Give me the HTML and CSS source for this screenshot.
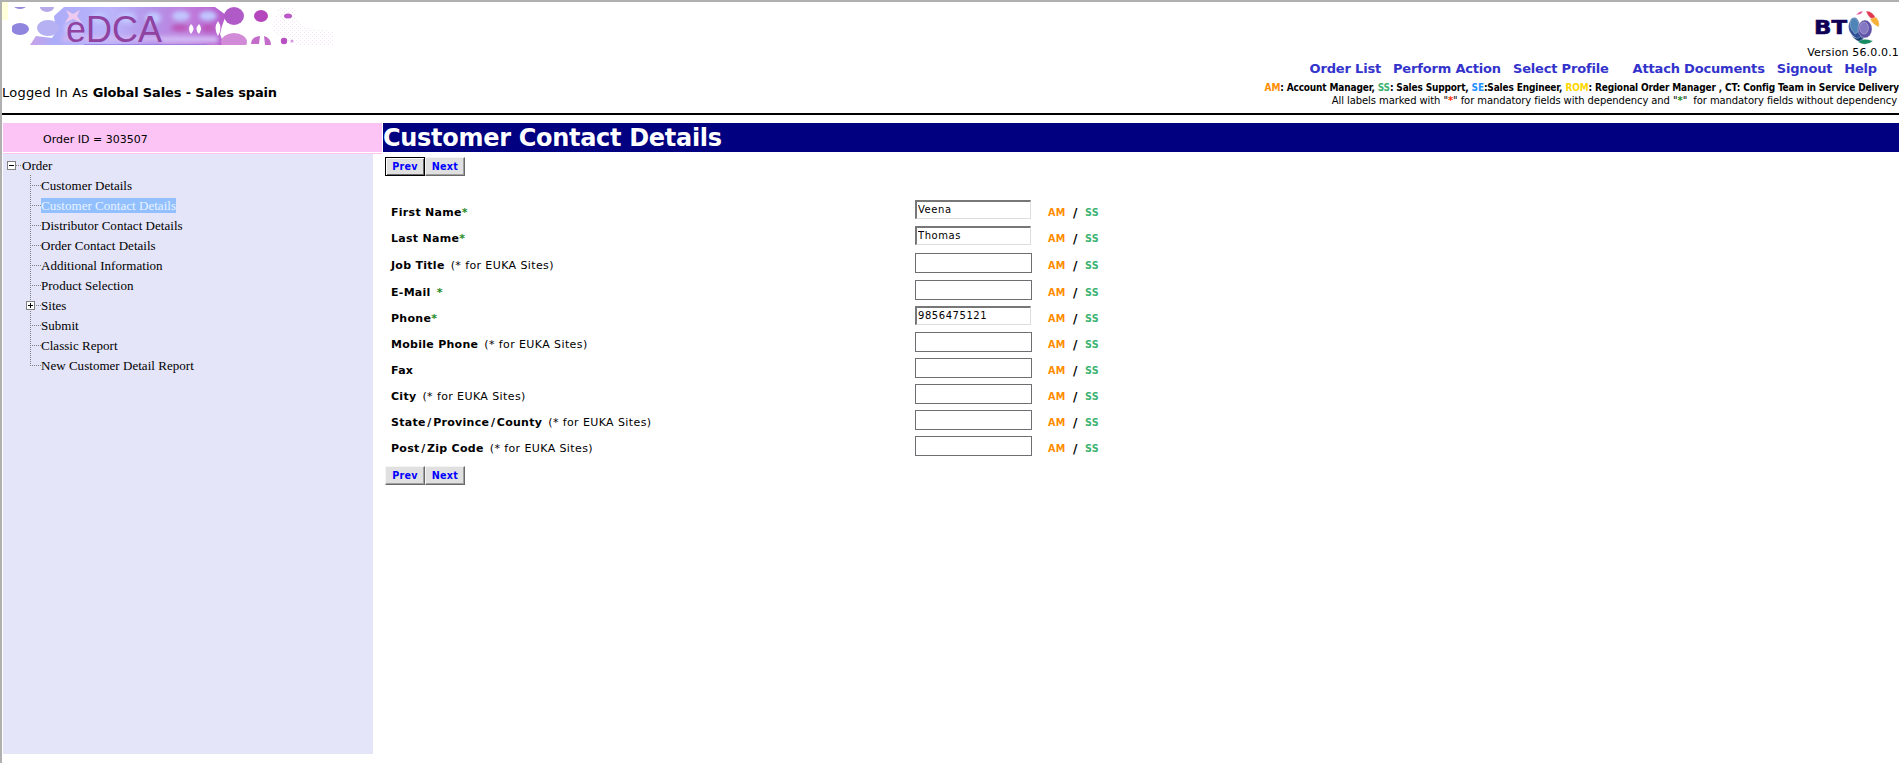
FILE: index.html
```html
<!DOCTYPE html>
<html lang="en">
<head>
<meta charset="utf-8">
<title>eDCA - Customer Contact Details</title>
<link rel="stylesheet" href="styles.css">
</head>
<body>
<div class="frame">
<header class="header">
  <div class="brand-side">
    <svg class="banner" width="338" height="43" viewBox="0 0 338 43">
      <defs>
        <linearGradient id="wash" x1="0" x2="1"><stop offset="0" stop-color="#c9a2e8"/><stop offset=".12" stop-color="#acacf8"/><stop offset=".42" stop-color="#bbb4fa"/><stop offset=".62" stop-color="#b493e8"/><stop offset=".8" stop-color="#c07fdc"/><stop offset="1" stop-color="#b55bcc"/></linearGradient>
        <filter id="soft"><feGaussianBlur stdDeviation="2"/></filter>
        <filter id="edge"><feGaussianBlur stdDeviation=".6"/></filter>
        <pattern id="dots" width="4" height="4" patternUnits="userSpaceOnUse"><path d="M0 0h1v1h-1zM2 2h1v1h-1z" fill="#f4e2f7"/></pattern>
        <clipPath id="strip"><rect x="10" y="5" width="328" height="38"/></clipPath>
      </defs>
      <rect width="6" height="18" fill="#ffffdc"/>
      <g clip-path="url(#strip)">
        <path d="M276 6h18v10l12 10 26 3v14h-40l-22-14z" fill="url(#dots)"/>
        <g filter="url(#edge)">
          <path d="M28 43L34 34L50 36L54 30L52 14L62 5H213L224 13L220 24L218 32L222 43Z" fill="url(#wash)"/>
          <ellipse cx="18" cy="4" rx="6" ry="3" fill="#9987d8"/><ellipse cx="45" cy="5" rx="7" ry="5" fill="#b6aae8"/>
          <ellipse cx="18" cy="27" rx="9" ry="6" fill="#8f85df"/><ellipse cx="46" cy="26" rx="11" ry="8" fill="#b5b1f3"/>
          <ellipse cx="232" cy="14" rx="10" ry="9" fill="#b05ac8"/><ellipse cx="259" cy="14" rx="7" ry="6" fill="#b547bd"/>
          <ellipse cx="286" cy="14" rx="4" ry="2.5" fill="#b958c6"/>
          <ellipse cx="232" cy="40" rx="13" ry="9" fill="#d28bd7"/>
          <path d="M249 42q0-7 9-8l-1 8zM262 34q7 2 7 9h-6z" fill="#c36cca"/>
          <circle cx="282" cy="39" r="3.2" fill="#b84fc1"/><circle cx="290" cy="39" r="1.5" fill="#d496dc"/>
          <path d="M64 8l7 4 7-4-3 6 5 7-9-4-8 4 4-7z" fill="#edc9ef"/>
        </g>
        <g filter="url(#soft)">
          <g fill="#c1c6ff"><ellipse cx="97" cy="16" rx="8" ry="6"/><ellipse cx="125" cy="16" rx="9" ry="6"/><ellipse cx="151" cy="16" rx="8" ry="6"/><ellipse cx="179" cy="14" rx="9" ry="5"/><ellipse cx="206" cy="14" rx="9" ry="5"/></g>
          <path d="M168 26q10-8 20 0q-10 7-20 0zM199 26q8-8 14 0q-7 8-14 0z" fill="#bb55b8"/>
          <path d="M60 34H160V39H60zM160 34h56v7h-56z" fill="#d2b8f4"/>
          <path d="M63 22h18v10H63z" fill="#d3c6ff"/>
        </g>
        <g filter="url(#edge)" fill="#fff"><path d="M216 19q-5 7 0 15q5-8 0-15zM197 22q4 4 0 10q-5-5 0-10zM189 22q5 4 0 10q-4-5 0-10z"/></g>
        <path d="M82 42.5H205" stroke="#9574e5" opacity=".7"/>
      </g>
      <text x="64" y="40" class="banner-name">eDCA</text>
    </svg>
    <div class="login"><span class="login-as">Logged In As </span><b>Global Sales - Sales spain</b></div>
  </div>
  <div class="tools">
    <svg class="bt" width="66" height="34" viewBox="0 0 66 34">
      <text x="0" y="24" class="bt-name" textLength="33" lengthAdjust="spacingAndGlyphs">BT</text>
      <g stroke="#fff" stroke-width=".3">
      <path d="M37 9Q42 5 45 12L50 27Q49 33 43 29Q30 21 37 9Z" fill="#2f4f98"/>
      <path d="M38 8Q44 7 45 16Q46 22 41 24Q33 16 38 8Z" fill="#4f85b6"/>
      <ellipse cx="51" cy="19" rx="7" ry="9" fill="#6053a8"/><ellipse cx="50" cy="18" rx="4.5" ry="6" fill="#8478c2"/>
      <path d="M37 25q6 6 10 1l3 6q-7 1-13-7z" fill="#153e72"/>
      <path d="M44 32q5-5 15-1q-7 6-15 1z" fill="#178b62"/>
      <path d="M52 1q7 0 10 8l-4 0q-4-2-6-8z" fill="#e23650"/>
      <path d="M56 9l6-2q4 4 3 10-6-2-9-8z" fill="#f6b038"/>
      <path d="M42 5q3-4 7-4l-2 3z" fill="#e2559a"/></g>
    </svg>
    <div class="version">Version 56.0.0.1</div>
    <nav class="nav"><a>Order List</a><a>Perform Action</a><a>Select Profile</a><a class="gap">Attach Documents</a><a>Signout</a><a>Help</a></nav>
    <div class="legend"><span class="am">AM</span>: Account Manager, <span class="ss">SS</span>: Sales Support, <span class="se">SE</span>:Sales Engineer, <span class="rom">ROM</span>: Regional Order Manager , CT: Config Team in Service Delivery</div>
    <div class="note">All labels marked with "<span class="red">*</span>" for mandatory fields with dependency and "<span class="green">*</span>"&nbsp; for mandatory fields without dependency</div>
  </div>
</header>
<div class="columns">
  <aside class="side">
    <div class="order-id">Order ID = 303507</div>
    <div class="tree">
      <div class="root"><i class="box"></i><i class="link"></i><span>Order</span></div>
      <ul class="nodes">
        <li><span>Customer Details</span></li>
        <li><span class="selected">Customer Contact Details</span></li>
        <li><span>Distributor Contact Details</span></li>
        <li><span>Order Contact Details</span></li>
        <li><span>Additional Information</span></li>
        <li><span>Product Selection</span></li>
        <li class="branch"><i class="box plus"></i><span>Sites</span></li>
        <li><span>Submit</span></li>
        <li><span>Classic Report</span></li>
        <li class="last"><span>New Customer Detail Report</span></li>
      </ul>
    </div>
  </aside>
  <main class="main">
    <h1 class="title">Customer Contact Details</h1>
    <div class="buttons"><button class="btn focus">Prev</button><button class="btn">Next</button></div>
    <div class="form">
      <div class="row"><label><b>First Name</b><span class="green">*</span></label><input class="filled" value="Veena"><div class="roles"><span class="am">AM</span><b>/</b><span class="ss">SS</span></div></div>
      <div class="row"><label><b>Last Name</b><span class="green">*</span></label><input class="filled" value="Thomas"><div class="roles"><span class="am">AM</span><b>/</b><span class="ss">SS</span></div></div>
      <div class="row"><label><b>Job Title</b><span class="hint">(* for EUKA Sites)</span></label><input><div class="roles"><span class="am">AM</span><b>/</b><span class="ss">SS</span></div></div>
      <div class="row"><label><b>E-Mail</b><span class="green hint">*</span></label><input><div class="roles"><span class="am">AM</span><b>/</b><span class="ss">SS</span></div></div>
      <div class="row"><label><b>Phone</b><span class="green">*</span></label><input class="filled" value="9856475121"><div class="roles"><span class="am">AM</span><b>/</b><span class="ss">SS</span></div></div>
      <div class="row"><label><b>Mobile Phone</b><span class="hint">(* for EUKA Sites)</span></label><input><div class="roles"><span class="am">AM</span><b>/</b><span class="ss">SS</span></div></div>
      <div class="row"><label><b>Fax</b></label><input><div class="roles"><span class="am">AM</span><b>/</b><span class="ss">SS</span></div></div>
      <div class="row"><label><b>City</b><span class="hint">(* for EUKA Sites)</span></label><input><div class="roles"><span class="am">AM</span><b>/</b><span class="ss">SS</span></div></div>
      <div class="row"><label><b>State<span class="slash">/</span>Province<span class="slash">/</span>County</b><span class="hint">(* for EUKA Sites)</span></label><input><div class="roles"><span class="am">AM</span><b>/</b><span class="ss">SS</span></div></div>
      <div class="row"><label><b>Post<span class="slash">/</span>Zip Code</b><span class="hint">(* for EUKA Sites)</span></label><input><div class="roles"><span class="am">AM</span><b>/</b><span class="ss">SS</span></div></div>
    </div>
    <div class="buttons"><button class="btn">Prev</button><button class="btn">Next</button></div>
  </main>
</div>
</div>
</body>
</html>
```
FILE: styles.css
```css
* { box-sizing: border-box; }
body { margin: 0; overflow: hidden; background: #fff; color: #000; font-family: Verdana, "DejaVu Sans", sans-serif; }
.frame { height: 763px; border-left: 2px solid #b0b0b0; border-top: 2px solid #b0b0b0; }
.header { height: 113px; border-bottom: 2px solid #000; display: flex; justify-content: space-between; white-space: nowrap; }
.banner { display: block; overflow: visible; }
.banner-name { font: 36px "Liberation Sans", Arial, sans-serif; fill: #8f429f; }
.login { margin-top: 39px; font-size: 13px; line-height: 18px; letter-spacing: -.14px; }
.login-as { letter-spacing: .22px; }
.tools { display: flex; flex-direction: column; align-items: flex-end; }
.bt { margin: 8px 19px 0 0; overflow: visible; }
.bt-name { font: bold 19px "DejaVu Sans", sans-serif; fill: #100055; stroke: #100055; stroke-width: .6; }
.version { font-size: 11px; line-height: 14px; letter-spacing: .15px; margin-top: 2px; }
.nav { display: flex; gap: 12px; padding-right: 22px; line-height: 20px; margin-top: -1px; font-size: 13px; font-weight: bold; color: #3333cc; letter-spacing: -.18px; }
.nav .gap { margin-left: 12px; }
.legend { font: bold 10px/14px "DejaVu Sans Condensed", "DejaVu Sans", sans-serif; letter-spacing: -.15px; margin-top: 2px; }
.note { font-size: 10px; line-height: 14px; padding-right: 2px; letter-spacing: -.09px; margin-top: -1px; }
.am { color: #ff8c00; }
.ss { color: #3cb371; }
.se { color: #1e90ff; }
.rom { color: #ffd700; }
.red { color: #ff3300; }
.green { color: #228b22; }
.note .red, .note .green { font-weight: bold; }
.columns { display: flex; padding: 8px 0 0 1px; }
.side { width: 380px; }
.order-id { width: 379px; height: 29px; background: #fcc4f4; font-size: 11px; line-height: 34px; padding-left: 40px; margin-bottom: 1px; box-shadow: 0 1px #fff, 0 2px #fcc4f4; }
.tree { margin-top: 2px; width: 370px; height: 600px; background: #e4e5f9; font: 13px/20px "Liberation Serif", "Times New Roman", serif; letter-spacing: .03px; padding: 1px 0 0 4px; }
.root { display: flex; align-items: center; height: 20px; }
.root span { padding-top: 1px; }
.box { width: 9px; height: 9px; flex: none; border: 1px solid #808080; background: linear-gradient(#000, #000) center / 5px 1px no-repeat, #fff; }
.plus { background: linear-gradient(#000, #000) center / 5px 1px no-repeat, linear-gradient(#000, #000) center / 1px 5px no-repeat, #fff; }
.link { width: 5px; border-top: 1px dotted #808080; margin-right: 1px; }
.nodes { list-style: none; margin: 0 0 0 23px; padding: 0; }
.nodes li { height: 20px; display: flex; align-items: center; background: repeating-linear-gradient(#808080 0 1px, transparent 1px 2px) 0 0 / 1px 100% no-repeat, repeating-linear-gradient(90deg, #808080 0 1px, transparent 1px 2px) 0 10px / 11px 1px no-repeat; padding-left: 11px; }
.nodes .last { background-size: 1px 11px, 11px 1px; }
.nodes .branch { margin-left: -4px; padding-left: 0; background-position: 4px 0, 4px 10px; }
.branch .plus { margin-right: 6px; }
.nodes span { line-height: 15px; }
.nodes .selected { background: #92c0ff; color: #e8f3ff; }
.main { flex: 1; }
.title { margin: 0; height: 29px; background: #000080; color: #fff; font-size: 24px; line-height: 30px; letter-spacing: -.3px; white-space: nowrap; }
.buttons { display: flex; padding: 5px 0 0 2px; }
.btn { width: 40px; height: 19px; padding: 0; font: bold 9.6px/14px Verdana, "DejaVu Sans", sans-serif; letter-spacing: .3px; color: #00f; background: #e0e0e0; border: 1px solid; border-color: #f4f4f4 #696969 #696969 #f4f4f4; box-shadow: inset -1px -1px #a0a0a0; }
.btn.focus { border-color: #000; box-shadow: inset 1px 1px #fff, inset -1px -1px #696969; }
.form { margin-top: 24px; padding-left: 8px; }
.row { display: grid; grid-template-columns: 524px 133px 60px; height: 26px; align-items: start; }
.row:nth-child(2), .row:nth-child(3) { height: 27px; }
.row label { font-size: 11px; line-height: 14px; padding-top: 6px; white-space: nowrap; }
.row label b { letter-spacing: .28px; }
.slash { margin: 0 1.6px; }
.row label .green { font-weight: bold; }
.hint { margin-left: 6px; letter-spacing: .4px; }
.row input { width: 117px; height: 20px; border: 1px solid #6e6e73; padding: 0 2px; font: 10px Verdana, "DejaVu Sans", sans-serif; letter-spacing: .55px; }
.row .filled { width: 116px; height: 19px; border-width: 2px 1px 1px 2px; border-color: #777 #ddd #ddd #777; padding: 0 1px 2px; }
.roles { display: flex; justify-content: space-between; width: 51px; font-size: 9.6px; font-weight: bold; line-height: 14px; letter-spacing: .3px; padding-top: 6px; }
.roles b { font-size: 12px; }
.form + .buttons { padding-top: 4px; }
```
